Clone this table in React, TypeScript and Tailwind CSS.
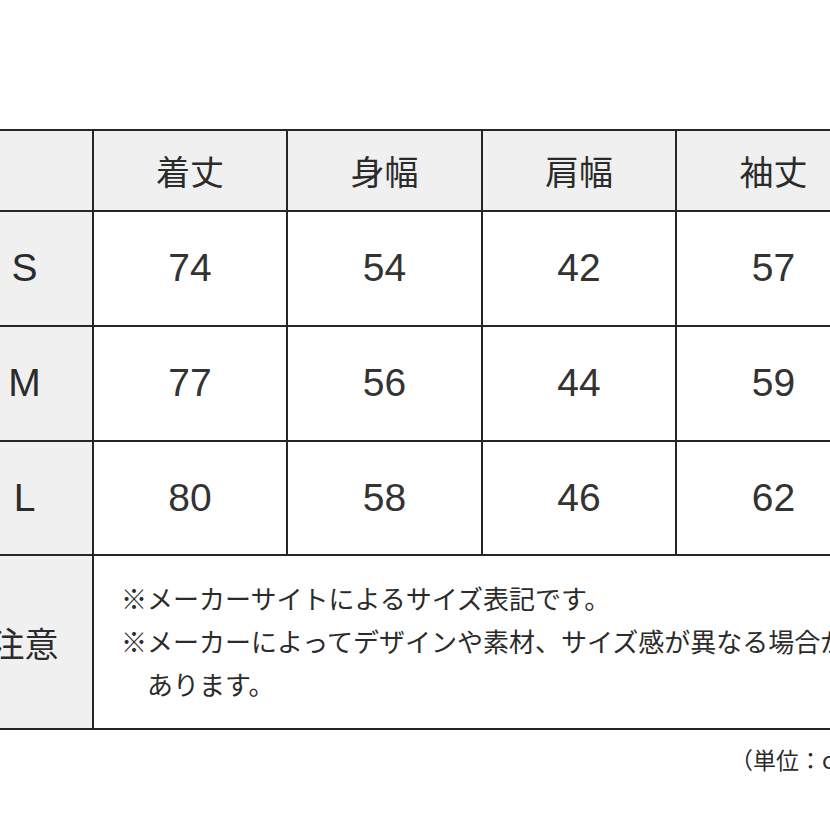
import React from "react";

const rows = [
  { size: "S", v: ["74", "54", "42", "57"] },
  { size: "M", v: ["77", "56", "44", "59"] },
  { size: "L", v: ["80", "58", "46", "62"] },
];

const jp = "font-['Noto_Sans_CJK_JP','Noto_Sans',sans-serif]";
const lat = "font-['Liberation_Sans',Arial,sans-serif]";

export default function App() {
  return (
    <div className="w-[830px] h-[830px] overflow-hidden bg-white text-[#2b2b2b]">
      <div className="pt-[129px] ml-[-45px] w-[920px]">
        <div className="grid grid-cols-[137px_194px_195px_194px_195px] grid-rows-[81px_115px_115px_114px_174px] border-t-2 border-l-2 border-[#262626] w-max">
          <div className="bg-[#f0f0f0] border-r-2 border-b-2 border-[#262626]" />
          {["着丈", "身幅", "肩幅", "袖丈"].map((h) => (
            <div
              key={h}
              className={`${jp} bg-[#f0f0f0] border-r-2 border-b-2 border-[#262626] flex items-center justify-center text-[34px]`}
            >
              {h}
            </div>
          ))}
          {rows.map((r) => (
            <React.Fragment key={r.size}>
              <div
                className={`${lat} bg-[#f0f0f0] border-r-2 border-b-2 border-[#262626] flex items-center justify-center text-[39px]`}
              >
                {r.size}
              </div>
              {r.v.map((n, i) => (
                <div
                  key={i}
                  className={`${lat} bg-white border-r-2 border-b-2 border-[#262626] flex items-center justify-center text-[39px] text-[#333]`}
                >
                  {n}
                </div>
              ))}
            </React.Fragment>
          ))}
          <div
            className={`${jp} bg-[#f0f0f0] border-r-2 border-b-2 border-[#262626] flex items-center justify-center text-[34px]`}
          >
            注意
          </div>
          <div
            className={`${jp} col-span-4 bg-white border-r-2 border-b-2 border-[#262626] flex flex-col justify-center pl-[27px] pb-[4px] text-[26px] leading-[43px] whitespace-nowrap`}
          >
            <div>※メーカーサイトによるサイズ表記です。</div>
            <div>※メーカーによってデザインや素材、サイズ感が異なる場合が</div>
            <div className="pl-[26px]">あります。</div>
          </div>
        </div>
        <div
          className={`${jp} mt-[17px] pl-[775px] text-[23px] leading-[24px] whitespace-nowrap`}
        >
          （単位：cm）
        </div>
      </div>
    </div>
  );
}
